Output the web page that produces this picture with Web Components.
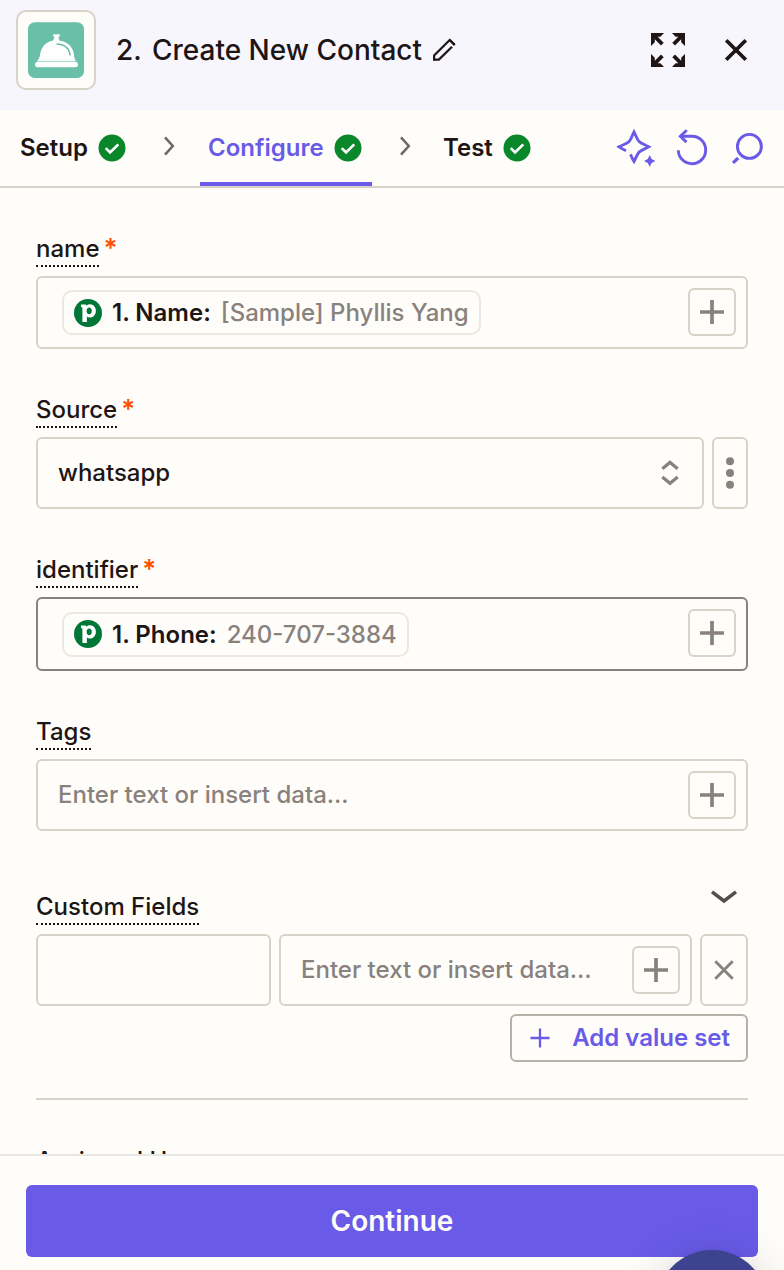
<!DOCTYPE html>
<html lang="en">
<head>
<meta charset="utf-8">
<title>Create New Contact</title>
<style>
html,body{margin:0;height:100%;overflow:hidden}
body{background:#fffdf9;font-family:Inter,"Liberation Sans",sans-serif;color:#201515}
</style>
</head>
<body>
<zap-panel></zap-panel>
<script>
const ICONS = {
  app: [80, 80, '<rect x="12" y="12.3" width="56" height="55.7" rx="7" fill="#69bfa7"/><g fill="#fff"><path d="M37.3 24.2h6.4v2.6h-1.2c0 1.800.5 2.900 1.300 3.900 8 .9 13.600 6.600 14.200 14.300.2 2.500.7 4 1.300 4.600H22c1.200-1.300 1.600-2.800 2-5.200 1.300-7.800 6.200-12.700 12.600-13.700 1-1 1.700-2.300 1.700-3.900h-1z"/><path d="M22 49.300h37l.7 1.900H21.600z"/><rect x="19" y="52" width="43" height="5.200" rx="2.600"/></g><path d="M20.500 51.600h40" stroke="#b8e0d5" stroke-width=".7"/><path d="M40.500 34c8 .4 13 4.300 13.500 11.500" fill="none" stroke="#69bfa7" stroke-width="1.500"/>'],
  pencil: [24, 24, '<g fill="none" stroke="#201515" stroke-width="2.200"><path d="M1.100 22.700v-5.200L16.700 2l5 5"/><path d="M16.700 2l5 4.900M1.300 21.600h4.600L19 8.700"/></g>'],
  expand: [34, 34, '<g fill="#201515"><path d="M0 0h13l-3.600 3.700H6.700l6 6-2.700 2.700-6.200-6.200V9.200L0 12.900z"/><path d="M34 0H21l3.600 3.700h2.700l-6 6 2.700 2.700 6.200-6.200v3l3.800 3.700z"/><path d="M0 34h13l-3.600-3.700H6.700l6-6-2.700-2.700-6.200 6.200v-3L0 21.100z"/><path d="M34 34H21l3.600-3.700h2.700l-6-6 2.700-2.700 6.200 6.200v-3l3.800-3.700z"/></g>'],
  close: [24, 24, '<path d="M2.200 2.200l19.600 19.600M21.800 2.200L2.200 21.800" stroke="#201515" stroke-width="3.700"/>'],
  check: [28, 28, '<circle cx="14" cy="14" r="13.500" fill="#0a862b"/><path d="M7.700 14.100l4.400 4.300 8.200-8" fill="none" stroke="#fff" stroke-width="2.700"/>'],
  next: [12, 20, '<path d="M2 1.300L9.800 10 2 18.700" fill="none" stroke="#6a6765" stroke-width="2.500"/>'],
  sparkle: [38, 38, '<g transform="translate(-1.300 1.200)"><path d="M9.300 20.600C6.700 19.300 4.500 18.200 2.300 16.600c4.400-2.300 8.100-3.200 10.100-5.300 2.100-2 2.800-5.700 4.900-9.600 2.100 3.900 3 7.600 5.100 9.600 2 2.100 5.600 3.100 9.600 5.300-4 2.200-7.600 3.300-9.600 5.300-2.100 2.100-3 5.700-5.100 9.400-1.600-2.400-2.400-4.700-3.500-7.100" fill="none" stroke="#695be8" stroke-width="2.900"/><path d="M33 24.800l1.900 3.900 3.800 2-3.800 2-1.900 3.900-1.900-3.900-3.800-2 3.800-2z" fill="#695be8"/></g>'],
  undo: [34, 38, '<path d="M2.300 21.200A13.700 13.700 0 1 0 16 7.300H5" fill="none" stroke="#695be8" stroke-width="2.900"/><path d="M10.800 1.200L4.300 7.300l6.200 5.800" fill="none" stroke="#695be8" stroke-width="2.900"/>'],
  search: [34, 34, '<circle cx="19.400" cy="15.400" r="12" fill="none" stroke="#695be8" stroke-width="2.900"/><path d="M8.200 27L3 31.900" stroke="#695be8" stroke-width="3.300"/>'],
  plus: [24, 24, '<path d="M0 12h24M12 0v24" stroke="#88817d" stroke-width="3.700"/>'],
  updown: [16, 26, '<path d="M.3 8.800L8 2.400l7.700 6.400M.3 16.900L8 23.300l7.700-6.400" fill="none" stroke="#88817d" stroke-width="3.200"/>'],
  dots: [8, 32, '<g fill="#88817d"><circle cx="4" cy="4.200" r="4"/><circle cx="4" cy="16" r="4"/><circle cx="4" cy="27.800" r="4"/></g>'],
  x: [20, 20, '<path d="M1.300 1.300l17.400 17.400M18.700 1.300L1.300 18.700" stroke="#88817d" stroke-width="2.900"/>'],
  down: [24, 14, '<path d="M0 1.800l12 9.200 12-9.200" fill="none" stroke="#574e4c" stroke-width="3.500"/>'],
  add: [20, 20, '<path d="M0.500 10h19M10 .5v19" stroke="#695be8" stroke-width="2.300"/>']
};
class ZapIcon extends HTMLElement {
  constructor(){super();this.attachShadow({mode:'open'})}
  connectedCallback(){
    const [w,h,body] = ICONS[this.getAttribute('name')];
    this.shadowRoot.innerHTML = `<style>:host{display:block;flex:none;width:${w}px;height:${h}px}svg{display:block;overflow:visible}</style><svg width="${w}" height="${h}" viewBox="0 0 ${w} ${h}">${body}</svg>`;
  }
}
customElements.define('zap-icon', ZapIcon);

function define(name, css, html){
  const t = document.createElement('template');
  t.innerHTML = `<style>*{box-sizing:border-box}${css}</style>${html}`;
  customElements.define(name, class extends HTMLElement {
    constructor(){super();this.attachShadow({mode:'open'}).append(t.content.cloneNode(true))}
  });
}

define('zap-header', `
:host{display:flex;box-sizing:border-box;height:110px;padding:10px 36px 20px 16px;background:#f7f6fd;align-items:center}
.app{width:80px;height:80px;border:2px solid #d7d3c9;border-radius:10px;background:#fffdf9;margin-right:20px}
.app zap-icon{margin:-2px}
.title{display:flex;font-size:28px;font-weight:500;line-height:40px;white-space:nowrap}
.n{width:36px}.t{width:281px}
.ex{margin-left:auto;margin-right:39px}
`, `<div class="app"><zap-icon name="app"></zap-icon></div><div class="title"><span class="n">2.</span><span class="t"><slot></slot></span></div><zap-icon name="pencil"></zap-icon><zap-icon class="ex" name="expand"></zap-icon><zap-icon name="close"></zap-icon>`);

define('zap-step', `
:host{display:flex;box-sizing:border-box;height:76px;padding:2px 10px 0 8px;align-items:center;justify-content:space-between;font-size:24px;font-weight:600;white-space:nowrap;border-bottom:4px solid transparent}
:host([active]){color:#695be8;border-color:#695be8}
zap-icon{margin-top:2px}
`, `<span><slot></slot></span><zap-icon name="check"></zap-icon>`);

define('zap-nav', `
:host{display:flex;box-sizing:border-box;height:78px;border-bottom:2px solid #d7d3c9;padding:0 20px 0 12px;align-items:center}
.s1{width:124px}.s2{width:172px}.s3{width:106px}
.c1{margin:0 25px 4px 27px}.c2{margin:0 24px 4px 27px}
.tools{display:flex;margin-left:auto;gap:20px;align-items:center}
`, `<zap-step class="s1">Setup</zap-step><zap-icon class="c1" name="next"></zap-icon><zap-step class="s2" active>Configure</zap-step><zap-icon class="c2" name="next"></zap-icon><zap-step class="s3">Test</zap-step><div class="tools"><zap-icon name="sparkle"></zap-icon><zap-icon name="undo"></zap-icon><zap-icon name="search"></zap-icon></div>`);

define('zap-label', `
:host{display:flex;height:32px;margin-bottom:9px;font-size:24px;font-weight:500;line-height:27px;white-space:nowrap}
.l{height:32px;border-bottom:2px dotted #201515}
.r{display:none;color:#ff4f00;margin-left:4px;font-size:26px;font-weight:600;line-height:26px}
:host([required]) .r{display:block}
`, `<span class="l"><slot></slot></span><span class="r">*</span>`);

define('zap-box', `
:host{display:flex;box-sizing:border-box;height:72px;border:2px solid #d7d3c9;border-radius:6px;align-items:center;font-size:24px;font-weight:500;white-space:nowrap}
`, `<slot></slot>`);

define('zap-insert', `
:host{display:flex;flex:none;box-sizing:border-box;width:48px;height:48px;border:2px solid #d7d3c9;border-radius:6px;align-items:center;justify-content:center;align-self:flex-start;margin:10px 10px 0 auto}
`, `<zap-icon name="plus"></zap-icon>`);

define('zap-pill', `
:host{display:flex;box-sizing:border-box;height:45px;border:2px solid #ebe9df;border-radius:10px;margin-left:24px;padding:0 10px;align-items:center;font-size:24px}
.logo{width:28px;height:28px;border-radius:50%;background:#017737;margin-right:10px;flex:none}
.k{font-weight:600;margin-right:10px}.v{color:#88817d;font-weight:500}
`, `<svg class="logo" viewBox="0 0 28 28"><path fill="#fff" fill-rule="evenodd" d="M7 5.500h4.800l.5 1.200c1-1 2.200-1.500 3.600-1.500 3.500 0 6 2.800 6 6.600 0 3.900-2.600 6.800-6 6.800-1.200 0-2.200-.4-3-1.100v5.500H8.400V9.200c0-.6-.2-.9-.9-.9H7zM15.200 8.400c-1.500 0-2.600 1.300-2.600 3.400 0 2 1.100 3.400 2.600 3.400s2.600-1.300 2.600-3.400-1.100-3.400-2.600-3.400z"/></svg><span class="k"><slot name="key"></slot></span><span class="v"><slot></slot></span>`);

define('zap-panel', `
:host{display:flex;flex-direction:column;height:1270px;width:784px;position:relative;overflow:hidden}
main{flex:1;min-height:0;overflow:hidden;padding:47px 36px 0}
section{margin-bottom:47px}
.row{display:flex;gap:8px}
.value,.ph{margin-left:20px;margin-bottom:2px}.ph{color:#88817d}
.select{flex:1}.select zap-icon{margin-left:auto;margin-right:24px}
.menu{width:36px;justify-content:center}
.b73{height:73px}.b74{height:74px;border-color:#88817d}
.cf{margin-top:62px;margin-bottom:0}
.head{display:flex;justify-content:space-between}.head zap-icon{margin:-3px 12px 0 0}
.key{width:235px}.val{width:413px}.del{width:48px;justify-content:center}
.add{display:flex;box-sizing:border-box;width:238px;height:48px;margin:8px 0 36px auto;border:2px solid #b5b2aa;border-radius:6px;align-items:center;padding:0 16px 0 18px;justify-content:space-between;color:#695be8;font-size:24px;font-weight:600}
.add span{margin-bottom:2px}
hr{border:0;height:2px;background:#d7d3c9;margin:0 0 47px}
footer{box-sizing:border-box;height:116px;border-top:2px solid #e9e7e3;padding:29px 26px 0}
.go{display:flex;height:72px;border-radius:6px;background:#695be8;color:#fffdf9;align-items:center;justify-content:center;font-size:28px;font-weight:600}
.chat{position:absolute;left:656px;top:1250px;width:112px;height:112px;border-radius:50%;background:#3d438f;box-shadow:0 2px 48px rgba(0,0,0,.14),0 1px 6px rgba(0,0,0,.05)}
`, `<zap-header>Create New Contact</zap-header><zap-nav></zap-nav>
<main>
<section><zap-label required>name</zap-label><zap-box class="b73"><zap-pill><span slot="key">1. Name:</span>[Sample] Phyllis Yang</zap-pill><zap-insert></zap-insert></zap-box></section>
<section><zap-label required>Source</zap-label><div class="row"><zap-box class="select"><span class="value">whatsapp</span><zap-icon name="updown"></zap-icon></zap-box><zap-box class="menu"><zap-icon name="dots"></zap-icon></zap-box></div></section>
<section><zap-label required>identifier</zap-label><zap-box class="b74"><zap-pill><span slot="key">1. Phone:</span>240-707-3884</zap-pill><zap-insert></zap-insert></zap-box></section>
<section><zap-label>Tags</zap-label><zap-box><span class="ph">Enter text or insert data...</span><zap-insert></zap-insert></zap-box></section>
<section class="cf"><div class="head"><zap-label>Custom Fields</zap-label><zap-icon name="down"></zap-icon></div><div class="row"><zap-box class="key"></zap-box><zap-box class="val"><span class="ph">Enter text or insert data...</span><zap-insert></zap-insert></zap-box><zap-box class="del"><zap-icon name="x"></zap-icon></zap-box></div>
<div class="add"><zap-icon name="add"></zap-icon><span>Add value set</span></div></section>
<hr><zap-label>Assigned User</zap-label>
</main>
<footer><div class="go">Continue</div></footer><div class="chat"></div>`);
</script>
</body>
</html>
